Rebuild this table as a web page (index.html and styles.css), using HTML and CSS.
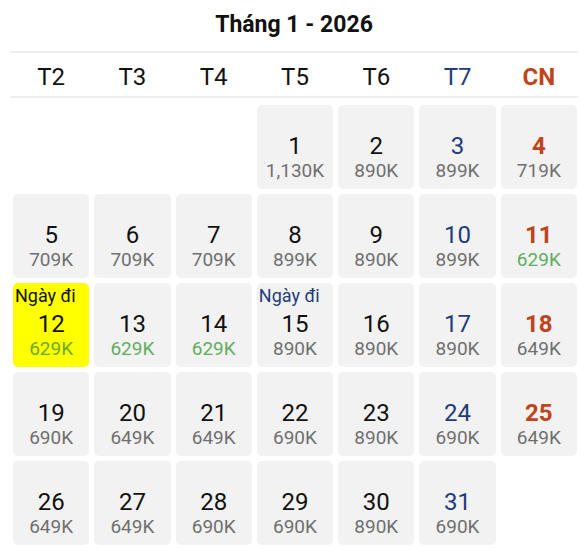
FILE: index.html
```html
<!DOCTYPE html>
<html lang="vi">
<head>
<meta charset="utf-8">
<link rel="stylesheet" href="styles.css">
</head>
<body>
<div class="cal">
  <div class="title">Tháng 1 - 2026</div>
  <div class="weekdays">
    <div class="wd">T2</div>
    <div class="wd">T3</div>
    <div class="wd">T4</div>
    <div class="wd">T5</div>
    <div class="wd">T6</div>
    <div class="wd sat">T7</div>
    <div class="wd sun">CN</div>
  </div>
  <div class="grid">
    <div class="empty"></div>
    <div class="empty"></div>
    <div class="empty"></div>
    <div class="day"><span class="num">1</span><span class="price">1,130K</span></div>
    <div class="day"><span class="num">2</span><span class="price">890K</span></div>
    <div class="day sat"><span class="num">3</span><span class="price">899K</span></div>
    <div class="day sun"><span class="num">4</span><span class="price">719K</span></div>

    <div class="day"><span class="num">5</span><span class="price">709K</span></div>
    <div class="day"><span class="num">6</span><span class="price">709K</span></div>
    <div class="day"><span class="num">7</span><span class="price">709K</span></div>
    <div class="day"><span class="num">8</span><span class="price">899K</span></div>
    <div class="day"><span class="num">9</span><span class="price">890K</span></div>
    <div class="day sat"><span class="num">10</span><span class="price">899K</span></div>
    <div class="day sun"><span class="num">11</span><span class="price cheap">629K</span></div>

    <div class="day selected"><span class="tag">Ngày đi</span><span class="num">12</span><span class="price cheap">629K</span></div>
    <div class="day"><span class="num">13</span><span class="price cheap">629K</span></div>
    <div class="day"><span class="num">14</span><span class="price cheap">629K</span></div>
    <div class="day"><span class="tag blue">Ngày đi</span><span class="num">15</span><span class="price">890K</span></div>
    <div class="day"><span class="num">16</span><span class="price">890K</span></div>
    <div class="day sat"><span class="num">17</span><span class="price">890K</span></div>
    <div class="day sun"><span class="num">18</span><span class="price">649K</span></div>

    <div class="day"><span class="num">19</span><span class="price">690K</span></div>
    <div class="day"><span class="num">20</span><span class="price">649K</span></div>
    <div class="day"><span class="num">21</span><span class="price">649K</span></div>
    <div class="day"><span class="num">22</span><span class="price">690K</span></div>
    <div class="day"><span class="num">23</span><span class="price">890K</span></div>
    <div class="day sat"><span class="num">24</span><span class="price">690K</span></div>
    <div class="day sun"><span class="num">25</span><span class="price">649K</span></div>

    <div class="day"><span class="num">26</span><span class="price">649K</span></div>
    <div class="day"><span class="num">27</span><span class="price">649K</span></div>
    <div class="day"><span class="num">28</span><span class="price">690K</span></div>
    <div class="day"><span class="num">29</span><span class="price">690K</span></div>
    <div class="day"><span class="num">30</span><span class="price">890K</span></div>
    <div class="day sat"><span class="num">31</span><span class="price">690K</span></div>
  </div>
</div>
</body>
</html>
```
FILE: styles.css
```css
html, body {
  margin: 0;
  padding: 0;
  background: #ffffff;
}
body {
  font-family: Roboto, "Noto Sans", "Liberation Sans", sans-serif;
  color: #111111;
  padding-top: 10px;
}
.cal {
  margin-left: 10px;
  width: 568px;
}
.title {
  text-align: center;
  font-weight: 700;
  font-size: 23px;
  line-height: 30px;
  height: 30px;
  padding-bottom: 11px;
  border-bottom: 2px solid #efefef;
}
.weekdays {
  display: grid;
  grid-template-columns: repeat(7, 1fr);
  column-gap: 5px;
  padding: 5px 1px 0 3px;
  height: 38px;
  border-bottom: 2px solid #efefef;
}
.wd {
  text-align: center;
  font-size: 24px;
  line-height: 38px;
  color: #111111;
}
.wd.sat { color: #1f3c7c; }
.wd.sun { color: #c0441b; font-weight: 700; }
.grid {
  display: grid;
  grid-template-columns: repeat(7, 1fr);
  grid-auto-rows: 84px;
  gap: 5px;
  padding: 0 1px 0 3px;
  margin-top: 7px;
}
.day {
  position: relative;
  background: #f2f2f2;
  border-radius: 5px;
  display: flex;
  flex-direction: column;
  align-items: center;
  justify-content: flex-end;
  padding-bottom: 8px;
  box-sizing: border-box;
}
.num {
  font-size: 24px;
  line-height: 26px;
  margin-bottom: 2px;
  color: #111111;
}
.price {
  font-size: 19px;
  line-height: 20px;
  color: #707070;
}
.price.cheap { color: #5fae5f; }
.day.sat .num { color: #1f3c7c; }
.day.sun .num { color: #c0441b; font-weight: 700; }
.day.selected { background: #ffff00; }
.day.selected .price.cheap { color: #6aac2c; }
.tag {
  position: absolute;
  left: 2px;
  top: 4px;
  font-size: 18px;
  line-height: 18px;
  color: #111111;
}
.tag.blue { color: #1f3c7c; }
```
